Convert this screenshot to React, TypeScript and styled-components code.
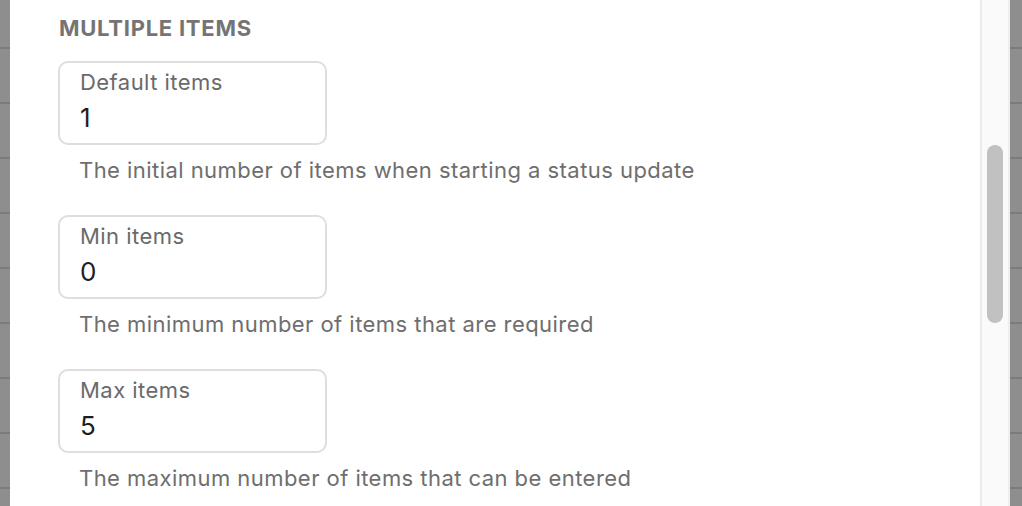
import React from "react";
import styled, { createGlobalStyle } from "styled-components";

const Global = createGlobalStyle`
  html, body { margin: 0; padding: 0; background: #fff; }
  body { font-family: Inter, "Noto Sans", sans-serif; -webkit-font-smoothing: antialiased; }
  * { box-sizing: border-box; }
`;

const Page = styled.div`
  display: flex;
  width: 1022px;
  height: 506px;
  overflow: hidden;
`;

const Backdrop = styled.div<{ $w: number }>`
  flex: 0 0 ${(p) => p.$w}px;
  background: repeating-linear-gradient(to bottom, #8e8e8e 0 53px, #7b7b7b 53px 55px);
  background-position: 0 -6px;
`;

const Panel = styled.div`
  flex: 1;
  background: #fff;
  padding: 15px 0 0 48px;
  display: flex;
  flex-direction: column;
`;

const Track = styled.div`
  flex: 0 0 30px;
  background: #fafafa;
  border-left: 2px solid #ebebeb;
  border-right: 2px solid #efefef;
  padding-top: 145px;
  display: flex;
  justify-content: center;
`;

const Thumb = styled.div`
  width: 16px;
  height: 178px;
  border-radius: 8px;
  background: #c1c1c1;
`;

const Title = styled.h2`
  margin: 0 0 0 1px;
  font-size: 22px;
  line-height: 26px;
  font-weight: 700;
  color: #747474;
  letter-spacing: 0.75px;
`;

const Group = styled.div`
  display: flex;
  flex-direction: column;
  margin-top: 20px;
  & + & { margin-top: 32px; }
`;

const Field = styled.label`
  width: 269px;
  height: 84px;
  border: 2px solid #dedede;
  border-radius: 10px;
  padding: 6px 0 0 20px;
  display: flex;
  flex-direction: column;
`;

const Label = styled.span`
  font-size: 22px;
  line-height: 26px;
  letter-spacing: 0.45px;
  color: #6a6a6a;
`;

const Value = styled.span`
  margin-top: 8px;
  font-size: 26px;
  line-height: 30px;
  letter-spacing: 0.3px;
  color: #1e1e1e;
`;

const Help = styled.p`
  margin: 12px 0 0 21px;
  font-size: 22px;
  line-height: 26px;
  letter-spacing: 0.45px;
  color: #6e6e6e;
`;

const fields = [
  { label: "Default items", value: "1", help: "The initial number of items when starting a status update" },
  { label: "Min items", value: "0", help: "The minimum number of items that are required" },
  { label: "Max items", value: "5", help: "The maximum number of items that can be entered" },
];

export default function App() {
  return (
    <>
      <Global />
      <Page>
        <Backdrop $w={10} />
        <Panel>
          <Title>MULTIPLE ITEMS</Title>
          {fields.map((f) => (
            <Group key={f.label}>
              <Field>
                <Label>{f.label}</Label>
                <Value>{f.value}</Value>
              </Field>
              <Help>{f.help}</Help>
            </Group>
          ))}
        </Panel>
        <Track>
          <Thumb />
        </Track>
        <Backdrop $w={12} />
      </Page>
    </>
  );
}
